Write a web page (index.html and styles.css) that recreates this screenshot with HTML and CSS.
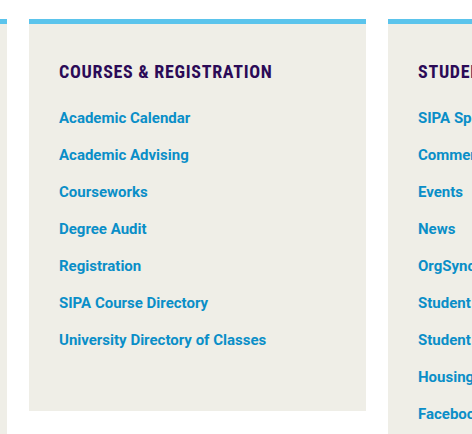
FILE: index.html
```html
<!doctype html>
<html lang="en">

<head>
  <title>SIPA Quick Links</title>
  <link rel="stylesheet" href="styles.css">
</head>

<body>
  <div class="cardRow">

    <div class="linkCard tall">
      <h3 class="cardTitle">QUICK LINKS</h3>
    </div>

    <div class="linkCard">
      <h3 class="cardTitle">COURSES &amp; REGISTRATION</h3>
      <ul class="linkList">
        <li><a href="#">Academic Calendar</a></li>
        <li><a href="#">Academic Advising</a></li>
        <li><a href="#">Courseworks</a></li>
        <li><a href="#">Degree Audit</a></li>
        <li><a href="#">Registration</a></li>
        <li><a href="#">SIPA Course Directory</a></li>
        <li><a href="#">University Directory of Classes</a></li>
      </ul>
    </div>

    <div class="linkCard tall">
      <h3 class="cardTitle">STUDENT LIFE</h3>
      <ul class="linkList">
        <li><a href="#">SIPA Spotlight</a></li>
        <li><a href="#">Commencement</a></li>
        <li><a href="#">Events</a></li>
        <li><a href="#">News</a></li>
        <li><a href="#">OrgSync</a></li>
        <li><a href="#">Student Affairs</a></li>
        <li><a href="#">Student Organizations</a></li>
        <li><a href="#">Housing</a></li>
        <li><a href="#">Facebook</a></li>
      </ul>
    </div>

  </div>
</body>

</html>
```

FILE: styles.css
```css
body {
  margin: 0;
  background-color: #ffffff;
  font-family: Roboto, "Liberation Sans", sans-serif;
  overflow: hidden;
}

.cardRow {
  display: flex;
  align-items: flex-start;
  gap: 22px;
  margin-left: -330px;
  padding-top: 19px;
}

.linkCard {
  flex: 0 0 337px;
  box-sizing: border-box;
  background-color: #efeee7;
  border-top: 5px solid #5bc4ec;
  padding: 36px 30px 61px 30px;
}

.tall {
  height: 500px;
}

.cardTitle {
  margin: 0;
  font-size: 18px;
  font-weight: 700;
  font-stretch: 85%;
  letter-spacing: 0.7px;
  color: #2b0a57;
  line-height: 24px;
}

.linkList {
  list-style: none;
  margin: 24px 0 0 0;
  padding: 0;
}

.linkList li {
  line-height: 20px;
  margin-bottom: 17px;
}

.linkList li:last-child {
  margin-bottom: 0;
}

.linkList a {
  color: #0a8ec8;
  font-size: 15px;
  font-weight: 700;
  text-decoration: none;
}
```
